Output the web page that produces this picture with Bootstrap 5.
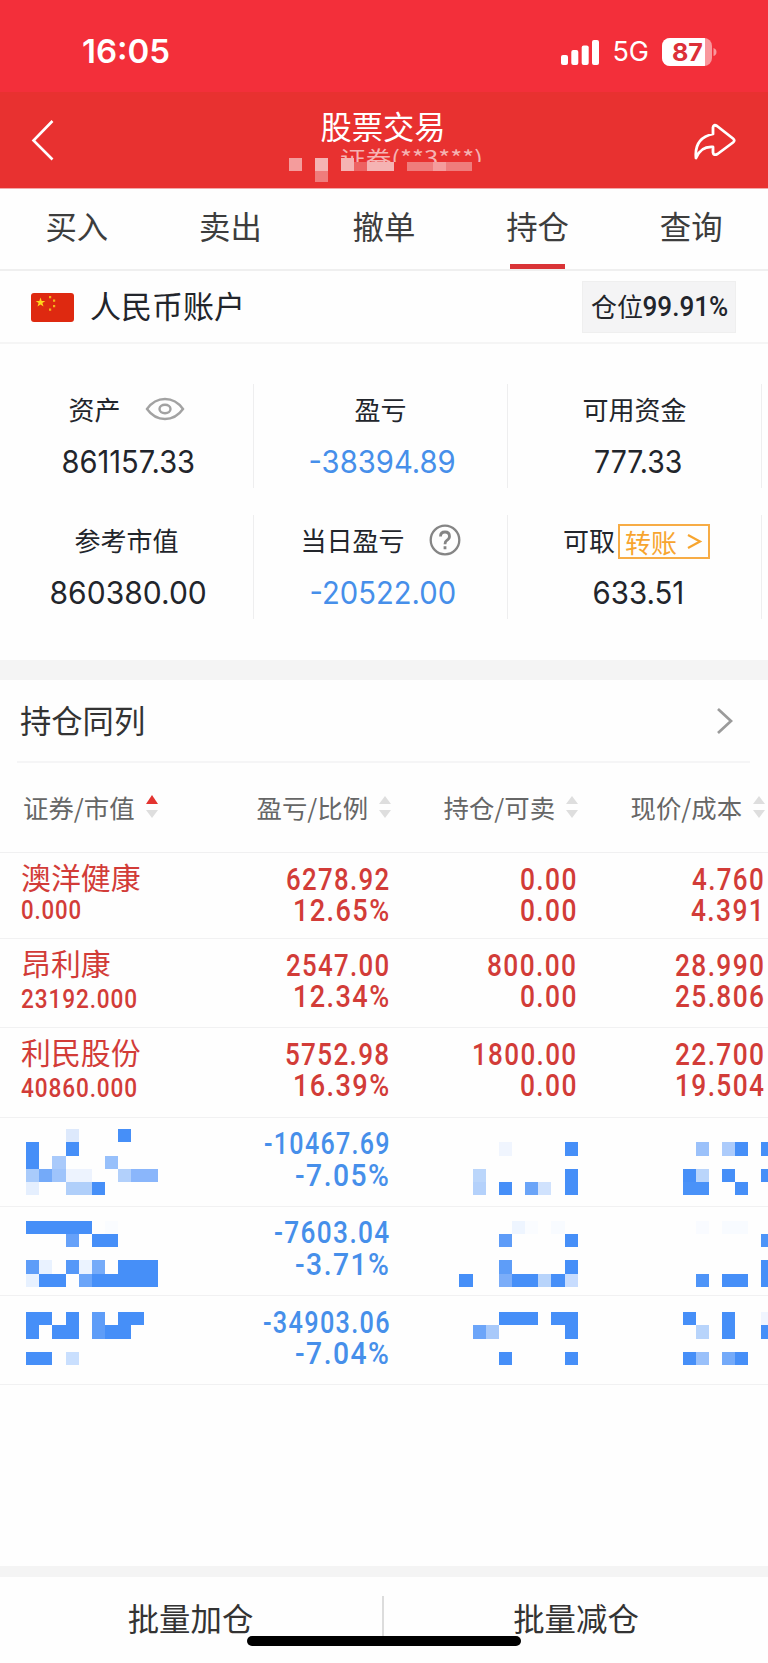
<!DOCTYPE html>
<html lang="zh-CN">
<head>
<meta charset="utf-8">
<meta name="viewport" content="width=device-width, initial-scale=1">
<title>股票交易</title>
<link href="https://cdn.jsdelivr.net/npm/bootstrap@5.3.0/dist/css/bootstrap.min.css" rel="stylesheet">
<script src="https://cdn.jsdelivr.net/npm/bootstrap@5.3.0/dist/js/bootstrap.bundle.min.js"></script>
<style>
  body { font-family: "Noto Sans CJK SC", sans-serif; color: #22252b; background: #fefefe; width: 768px; height: 1663px; overflow: hidden; }
  svg { display: block; flex: none; }
  .status { height: 92px; background: #f32f3a; font-family: Inter, sans-serif; padding: 11px 51px 0 82px; }
  .clock { font-size: 33px; font-weight: 600; }
  .net { font-size: 27px; margin: 2px 13px 0 12px; }
  .titlebar { height: 97px; background: #e83130; border-bottom: 1px solid #f3a9a9; padding: 0 31px; }
  .back { margin-right: 18px; }
  .share { margin-top: 3px; }
  .heading { padding-top: 14px; width: 200px; }
  .page-title { font-size: 31.3px; line-height: 40px; }
  .clip-sub { height: 16px; width: 148px; margin: 0 0 0 57px; overflow: hidden; color: #f5b3b3; font-size: 21px; line-height: 23px; white-space: nowrap; text-align: left; }
  .veil { left: 289px; top: 65px; }
  .tabs { height: 82px; border-bottom: 2px solid #efefef; }
  .tab-item { font-size: 31.4px; color: #3d3d3d; padding-bottom: 6px; }
  .tab-item.on::after { content: ""; position: absolute; bottom: 0; left: 49px; width: 55px; height: 5px; background: #d93336; }
  .account { height: 73px; border-bottom: 2px solid #f5f5f5; padding: 1px 32px 0 31px; font-size: 31px; }
  .account-name { margin-left: 16px; margin-top: -3px; }
  .position-rate { width: 154px; height: 52px; background: #f4f4f5; border: 1px solid #efefef; font-size: 26px; }
  .position-rate > span:first-child { margin-top: -3px; }
  .digits { font-family: Roboto, sans-serif; font-weight: 500; font-size: 27px; }
  .position-rate .digits { margin-left: -2px; margin-right: -3px; }
  .assets { padding-top: 40px; height: 316px; width: 762px; row-gap: 27px; display: grid; grid-template-columns: repeat(3, 254px); grid-auto-rows: 104px; }
  .asset { border-right: 1px solid #eeeeef; }
  .asset-label { font-size: 26px; height: 52px; padding-bottom: 3px; }
  .asset-value { font-family: Inter, sans-serif; font-size: 31px; line-height: 52px; }
  .blue { color: #468fea; }
  .transfer { color: #f7a52f; border: 2px solid #f7ac45; width: 92px; height: 35px; margin: 3px 0 0 3px; padding: 0 5px 0 5px; }
  .band { height: 20px; background: #f4f4f4; }
  .band.thin { height: 11px; }
  .section { height: 83px; margin: 0 18px 0 17px; border-bottom: 2px solid #f5f5f6; padding: 0 16px 0 3px; font-size: 31.3px; color: #333; }
  .heads { height: 90px; border-bottom: 1px solid #f0f0f1; font-size: 25.4px; color: #666; display: grid; grid-template-columns: 23px 233.5px 187px 187px 1fr; }
  .heads > div { gap: 11px; padding-bottom: 1px; }
  .hold { height: 89.3px; border-bottom: 1px solid #f1f1f2; color: #d23c38; display: grid; grid-template-columns: 21px 181px 187px 187px 188px; }
  .hold:first-child { height: 86px; }
  .hold.blue { color: #468fea; }
  .nums { padding-top: 10.5px; font-family: Roboto, sans-serif; font-weight: 500; font-size: 31px; line-height: 31.5px; text-align: right; letter-spacing: 1.6px; }
  .nums .fit { margin-right: -1.5px; }
  .hold-name { font-size: 29.9px; line-height: 40px; padding-top: 3px; }
  .hold-sub { font-family: Roboto, sans-serif; font-weight: 500; font-size: 25.5px; line-height: 30px; margin-top: 2px; letter-spacing: 1px; }
  .hold:first-child .hold-sub { margin-top: -1px; }
  .fit { display: inline-block; white-space: nowrap; }
  .fit.l { transform-origin: left; }
  .fit.r { transform-origin: right; }
  .mosaic { left: 0; top: 0; }
  .space { height: 180.500px; }
  .actions { height: 86px; font-size: 31.4px; color: #333; }
  .actions .col-6 { padding-top: 17px; }
  .actions .col-6:first-child { padding-right: 3px; }
  .vline { width: 2px; height: 41px; background: #dcdcdc; left: 382px; top: 19px; }
  .home { left: 247px; top: 59px; width: 274px; height: 10px; border-radius: 5px; background: #000; }
</style>
</head>
<body>
<header>
  <div class="status d-flex align-items-center text-white">
    <span class="fit l clock" data-w="88">16:05</span>
    <div class="d-flex align-items-center ms-auto">
      <svg width="40" height="26" viewBox="0 0 40 26" fill="#fff"><rect x="1" y="16" width="7" height="10" rx="2"/><rect x="11.3" y="11" width="7" height="15" rx="2"/><rect x="21.7" y="6.500" width="7" height="19.500" rx="2"/><rect x="32" y="1" width="7" height="25" rx="2"/></svg>
      <span class="net fit">5G</span>
      <svg width="55" height="28" viewBox="0 0 55 28"><defs><clipPath id="cell"><rect width="50" height="28" rx="8"/></clipPath></defs><g clip-path="url(#cell)"><rect width="50" height="28" fill="#f9979c"/><rect width="43" height="28" fill="#fff"/></g><path d="M51.500 10q3 1 3 4t-3 4z" fill="#f9979c"/><text x="25.500" y="22.800" text-anchor="middle" font-family="Inter, sans-serif" font-weight="700" font-size="24.500" textLength="31" lengthAdjust="spacingAndGlyphs" fill="#dc3038">87</text></svg>
    </div>
  </div>
  <div class="titlebar position-relative d-flex justify-content-between text-white">
    <svg class="back align-self-center" width="24" height="42" viewBox="0 0 24 42" fill="none" stroke="#fff" stroke-width="2.600"><path d="M21.500 2L2.500 21.500l19 19"/></svg>
    <div class="heading text-center">
      <div class="page-title">股票交易</div>
      <div class="clip-sub"><span class="fit l" data-w="143">证券(**3***)</span></div>
    </div>
    <svg class="share align-self-center" width="44" height="38" viewBox="0 0 44 38" fill="none" stroke="#fff" stroke-width="2.800" stroke-linejoin="round"><path d="M20 11V4.500Q20.500 1 24 3L40 15.500Q42.500 17.500 40 19.500L24.500 31Q20.500 33 20 29.500V24Q8 23 3 35Q1 15 20 11z"/></svg>
    <svg class="veil position-absolute" width="184" height="26" viewBox="0 0 184 26"><path fill="#f49c9c" d="M0 1h13v13H0zM144 5h13v9h-13z"/><path fill="#f5b3b3" d="M26 1h13v13H26zM52 1h13v13H52zM78 5h27v9H78z"/><path fill="#ef7c7c" d="M26 14h13v11H26zM118 5h26v9h-26zM157 5h26v9h-26z"/><path fill="#ed6262" d="M65 5h13v9H65z"/></svg>
  </div>
</header>
<nav class="tabs row g-0 text-center">
  <div class="tab-item col d-flex align-items-center justify-content-center">买入</div>
  <div class="tab-item col d-flex align-items-center justify-content-center">卖出</div>
  <div class="tab-item col d-flex align-items-center justify-content-center">撤单</div>
  <div class="tab-item on position-relative col d-flex align-items-center justify-content-center">持仓</div>
  <div class="tab-item col d-flex align-items-center justify-content-center">查询</div>
</nav>
<section class="account d-flex align-items-center">
  <svg width="43" height="29" viewBox="0 0 43 29"><rect width="43" height="29" rx="3" fill="#de2910"/><path fill="#ffd51c" d="M9.500 4.500l1.200 3.400 3.600 0-2.900 2.200 1.100 3.500-3-2.100-3 2.100 1.100-3.500-2.900-2.200 3.600 0z"/><path fill="#f3b51b" d="M18 3h2.200v2.200H18zM22 6.500h2.200v2.200H22zM22 12h2.200v2.200H22zM18 15.500h2.200v2.200H18z"/></svg>
  <div class="account-name">人民币账户</div>
  <div class="position-rate ms-auto d-flex align-items-center justify-content-center"><span>仓位</span><span class="digits fit" data-w="86">99.91%</span></div>
</section>
<section class="assets text-center">
  <div class="asset">
    <div class="asset-label d-flex align-items-center justify-content-center">资产<svg class="ms-4" width="40" height="24" viewBox="0 0 40 24" fill="none" stroke="#a2a2a2" stroke-width="2.400"><path d="M2 12C7 5 13 2 20 2S33 5 38 12C33 19 27 22 20 22S7 19 2 12z"/><ellipse cx="20" cy="12" rx="5.500" ry="4.200"/></svg></div>
    <div class="asset-value"><span class="fit ms-1" data-w="134">861157.33</span></div>
  </div>
  <div class="asset">
    <div class="asset-label d-flex align-items-center justify-content-center">盈亏</div>
    <div class="asset-value blue ps-1"><span class="fit" data-w="147">-38394.89</span></div>
  </div>
  <div class="asset">
    <div class="asset-label d-flex align-items-center justify-content-center">可用资金</div>
    <div class="asset-value ps-2"><span class="fit" data-w="88">777.33</span></div>
  </div>
  <div class="asset">
    <div class="asset-label d-flex align-items-center justify-content-center">参考市值</div>
    <div class="asset-value"><span class="fit ms-1" data-w="157">860380.00</span></div>
  </div>
  <div class="asset">
    <div class="asset-label d-flex align-items-center justify-content-center">当日盈亏<svg class="ms-4" width="32" height="32" viewBox="0 0 32 32" fill="none" stroke="#858585" stroke-width="2.300"><circle cx="16" cy="16" r="14.300"/><path stroke-width="2.800" d="M11.500 12.500Q11.500 8 16 8t4.500 4.300Q20.500 15 17.700 16.400Q16 17.300 16 20.200M16 22.300v3"/></svg></div>
    <div class="asset-value blue ps-1"><span class="fit" data-w="147">-20522.00</span></div>
  </div>
  <div class="asset">
    <div class="asset-label d-flex align-items-center justify-content-center ps-1">可取<div class="transfer d-flex align-items-center justify-content-between">转账<svg width="17" height="18" viewBox="0 0 17 18" fill="none" stroke="#f7a52f" stroke-width="2.200"><path d="M2 3l12 6.500-12 6.500"/></svg></div></div>
    <div class="asset-value ps-2"><span class="fit" data-w="92">633.51</span></div>
  </div>
</section>
<div class="band"></div>
<section class="section d-flex align-items-center justify-content-between">持仓同列
  <svg width="18" height="28" viewBox="0 0 18 28" fill="none" stroke="#9b9b9b" stroke-width="2.700"><path d="M2 2l13 12L2 26"/></svg>
</section>
<section class="heads">
  <div></div>
  <div class="d-flex align-items-center">证券/市值<svg width="12" height="24" viewBox="0 0 12 24"><path fill="#e33430" d="M6 0l6 9H0z"/><path fill="#dedede" d="M0 15h12l-6 8z"/></svg></div>
  <div class="d-flex align-items-center">盈亏/比例<svg width="12" height="24" viewBox="0 0 12 24" fill="#dedede"><path d="M6 1l6 8H0zM0 15h12l-6 8z"/></svg></div>
  <div class="d-flex align-items-center">持仓/可卖<svg width="12" height="24" viewBox="0 0 12 24" fill="#dedede"><path d="M6 1l6 8H0zM0 15h12l-6 8z"/></svg></div>
  <div class="d-flex align-items-center">现价/成本<svg width="12" height="24" viewBox="0 0 12 24" fill="#dedede"><path d="M6 1l6 8H0zM0 15h12l-6 8z"/></svg></div>
</section>
<section>
  <div class="hold">
    <div></div>
    <div><div class="hold-name">澳洋健康</div><div class="hold-sub"><span class="fit l" data-w="61">0.000</span></div></div>
    <div class="nums"><span class="fit r" data-w="105">6278.92</span><br><span class="fit r" data-w="98">12.65%</span></div>
    <div class="nums"><span class="fit r" data-w="58">0.00</span><br><span class="fit r" data-w="58">0.00</span></div>
    <div class="nums"><span class="fit r" data-w="73">4.760</span><br><span class="fit r" data-w="74">4.391</span></div>
  </div>
  <div class="hold">
    <div></div>
    <div><div class="hold-name">昂利康</div><div class="hold-sub"><span class="fit l" data-w="117">23192.000</span></div></div>
    <div class="nums"><span class="fit r" data-w="105">2547.00</span><br><span class="fit r" data-w="98">12.34%</span></div>
    <div class="nums"><span class="fit r" data-w="90">800.00</span><br><span class="fit r" data-w="58">0.00</span></div>
    <div class="nums"><span class="fit r" data-w="90">28.990</span><br><span class="fit r" data-w="90">25.806</span></div>
  </div>
  <div class="hold">
    <div></div>
    <div><div class="hold-name">利民股份</div><div class="hold-sub"><span class="fit l" data-w="117">40860.000</span></div></div>
    <div class="nums"><span class="fit r" data-w="106">5752.98</span><br><span class="fit r" data-w="98">16.39%</span></div>
    <div class="nums"><span class="fit r" data-w="106">1800.00</span><br><span class="fit r" data-w="58">0.00</span></div>
    <div class="nums"><span class="fit r" data-w="90">22.700</span><br><span class="fit r" data-w="90">19.504</span></div>
  </div>
  <div class="hold blue position-relative">
    <div></div><div></div>
    <div class="nums"><span class="fit r" data-w="127">-10467.69</span><br><span class="fit r" data-w="95">-7.05%</span></div>
    <svg class="mosaic position-absolute" width="768" height="88" data-y="11" data-cells="3,0,1,#dde9fc 7,0,1,#468ff8 0,1,1,#468ff8 3,1,1,#468ff8 0,2,1,#468ff8 2,2,1,#a9cafb 6,2,1,#97c0fb 0,3,1,#a9cbfb 1,3,1,#74aaf9 2,3,1,#9fc4fb 3,3,2,#edf3fe 7,3,1,#b2d0fb 8,3,2,#8ab6fb 0,4,1,#e5effe 3,4,2,#b0cffa 5,4,1,#468ff8 36,1,1,#f0f5fe 41,1,1,#468ff8 34,3,1,#bbd6fb 41,3,1,#468ff8 34,4,1,#b4d1fb 36,4,1,#468ff8 38,4,1,#6aa4f8 39,4,1,#d0e2fd 41,4,1,#468ff8 51,1,1,#9bc1fa 53,1,1,#accbfb 54,1,1,#468ff8 56,1,1,#468ff8 50,3,1,#468ff8 51,3,1,#bad5fb 53,3,1,#468ff8 56,3,1,#468ff8 50,4,2,#4a92f8 54,4,1,#468ff8"></svg>
  </div>
  <div class="hold blue position-relative">
    <div></div><div></div>
    <div class="nums"><span class="fit r" data-w="117">-7603.04</span><br><span class="fit r" data-w="95">-3.71%</span></div>
    <svg class="mosaic position-absolute" width="768" height="88" data-y="13.500" data-cells="0,0,5,#468ff8 6,0,1,#fafcff 3,1,1,#66a1f9 5,1,2,#468ff8 0,3,1,#5e9df8 1,3,1,#e9f2ff 3,3,1,#5598f8 4,3,1,#ebf3ff 5,3,1,#75abf9 7,3,3,#468ff8 0,4,1,#e7f1ff 1,4,2,#468ff8 4,4,1,#6ba5f9 5,4,5,#468ff8 37,0,1,#eef5ff 38,0,1,#fafcff 40,0,1,#f8fbff 36,1,1,#5e9cf8 41,1,1,#468ff8 36,3,1,#5e9df8 41,3,1,#468ff8 33,4,1,#468ff8 36,4,1,#7badf9 37,4,2,#468ff8 39,4,1,#b8d4fb 40,4,1,#468ff8 41,4,1,#c7dcfe 51,0,1,#f9fbff 53,0,2,#f8fbff 56,1,1,#4d94f8 56,3,1,#468ff8 51,4,1,#4e94f8 53,4,2,#468ff8 56,4,1,#468ff8"></svg>
  </div>
  <div class="hold blue position-relative">
    <div></div><div></div>
    <div class="nums"><span class="fit r" data-w="128">-34903.06</span><br><span class="fit r" data-w="95">-7.04%</span></div>
    <svg class="mosaic position-absolute" width="768" height="88" data-y="16" data-cells="0,0,2,#468ff8 3,0,1,#468ff8 5,0,1,#5e9df8 7,0,2,#468ff8 0,1,1,#468ff8 2,1,2,#468ff8 5,1,1,#5e9df8 6,1,2,#468ff8 0,3,2,#468ff8 3,3,1,#c9dffe 36,0,3,#468ff8 40,0,2,#468ff8 34,1,1,#6ca5f9 35,1,1,#a8c9fa 41,1,1,#468ff8 36,3,1,#468ff8 41,3,1,#468ff8 50,0,1,#468ff8 53,0,1,#468ff8 56,0,1,#f0f5ff 51,1,1,#b8d4fb 53,1,1,#468ff8 56,1,1,#468ff8 50,3,1,#468ff8 51,3,1,#99c0fa 53,3,1,#74aaf9 54,3,1,#468ff8"></svg>
  </div>
</section>
<div class="space"></div>
<div class="band thin"></div>
<footer class="actions position-relative row g-0 text-center">
  <div class="col-6 d-flex justify-content-center">批量加仓</div>
  <div class="col-6 d-flex justify-content-center">批量减仓</div>
  <div class="vline position-absolute"></div>
  <div class="home position-absolute"></div>
</footer>
<script>
  document.querySelectorAll('.fit[data-w]').forEach(function (el) {
    el.style.transform = 'scaleX(' + (el.dataset.w / el.offsetWidth) + ')';
  });
  // Privacy mosaic: column, row, span, colour
  document.querySelectorAll('.mosaic').forEach(function (svg) {
    var size = 13.13, top = +svg.dataset.y;
    svg.dataset.cells.split(' ').forEach(function (cell) {
      var p = cell.split(','), r = document.createElementNS('http://www.w3.org/2000/svg', 'rect');
      var x = Math.round(26.2 + p[0] * size), x2 = Math.round(26.2 + (+p[0] + +p[2]) * size);
      var y = Math.round(top + p[1] * 13.25), y2 = Math.round(top + (+p[1] + 1) * 13.25);
      r.setAttribute('x', x); r.setAttribute('y', y);
      r.setAttribute('width', x2 - x); r.setAttribute('height', y2 - y);
      r.setAttribute('fill', p[3]);
      svg.appendChild(r);
    });
  });
</script>
</body>
</html>
